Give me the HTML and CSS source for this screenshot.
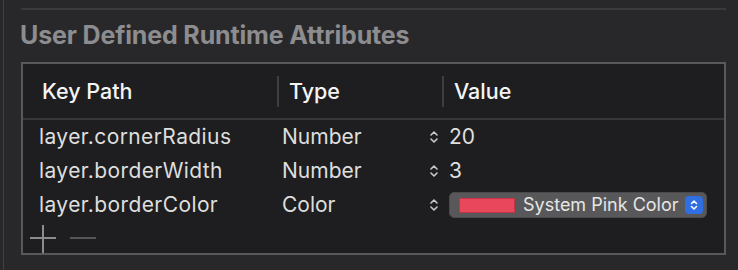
FILE: index.html
```html
<!DOCTYPE html>
<html lang="en">
<head>
    <meta charset="UTF-8">
    <title>User Defined Runtime Attributes</title>
    <link rel="stylesheet" href="styles.css">
</head>
<body>
    <div class="panel">
        <div class="separator"></div>
        <h2 class="section-title">User Defined Runtime Attributes</h2>

        <div class="attr-table">
            <div class="attr-header">
                <div class="col col-key">Key Path</div>
                <div class="col col-type">Type</div>
                <div class="col col-value">Value</div>
            </div>

            <div class="attr-row">
                <div class="cell cell-key">layer.cornerRadius</div>
                <div class="cell cell-type">
                    <span>Number</span>
                    <svg class="stepper" width="10" height="16" viewBox="0 0 10 16"><path d="M2 6 L5 3 L8 6 M2 10 L5 13 L8 10"/></svg>
                </div>
                <div class="cell cell-value">20</div>
            </div>

            <div class="attr-row">
                <div class="cell cell-key">layer.borderWidth</div>
                <div class="cell cell-type">
                    <span>Number</span>
                    <svg class="stepper" width="10" height="16" viewBox="0 0 10 16"><path d="M2 6 L5 3 L8 6 M2 10 L5 13 L8 10"/></svg>
                </div>
                <div class="cell cell-value">3</div>
            </div>

            <div class="attr-row">
                <div class="cell cell-key">layer.borderColor</div>
                <div class="cell cell-type">
                    <span>Color</span>
                    <svg class="stepper" width="10" height="16" viewBox="0 0 10 16"><path d="M2 6 L5 3 L8 6 M2 10 L5 13 L8 10"/></svg>
                </div>
                <div class="cell cell-value">
                    <div class="color-popup">
                        <span class="swatch"></span>
                        <span class="color-name">System Pink Color</span>
                        <span class="popup-arrows">
                            <svg width="10" height="14" viewBox="0 0 10 14"><path d="M2.5 5.5 L5 3 L7.5 5.5 M2.5 8.5 L5 11 L7.5 8.5"/></svg>
                        </span>
                    </div>
                </div>
            </div>

            <div class="attr-footer">
                <span class="btn-add"></span>
                <span class="btn-remove"></span>
            </div>
        </div>
    </div>
</body>
</html>
```

FILE: styles.css
```css
body {
    margin: 0;
    background-color: #28282a;
    font-family: Inter, "Liberation Sans", sans-serif;
    width: 738px;
    height: 270px;
    overflow: hidden;
}

.panel {
    margin-left: 3px;
    border-left: 1px solid #404042;
    height: 270px;
    padding-top: 8px;
    box-sizing: border-box;
}

.separator {
    margin-left: 17px;
    width: 705px;
    height: 2px;
    background-color: #3a3a3c;
}

.section-title {
    margin: 0 0 0 16px;
    height: 52px;
    line-height: 50px;
    font-size: 25px;
    font-weight: bold;
    color: #8d8d90;
    letter-spacing: -0.15px;
}

.attr-table {
    margin-left: 17px;
    width: 705px;
    height: 193px;
    box-sizing: border-box;
    border: 2px solid #59595b;
    background-color: #1e1e20;
}

.attr-header {
    display: grid;
    grid-template-columns: 254px 165px 1fr;
    height: 54px;
    align-items: center;
    border-bottom: 2px solid #37373a;
}

.col {
    color: #f4f4f4;
    font-size: 21.5px;
    line-height: 31px;
    font-weight: 500;
}

.col-key {
    padding-left: 19px;
}

.col-type,
.col-value {
    border-left: 2px solid #3e3e41;
    padding-left: 10px;
}

.attr-row {
    display: grid;
    grid-template-columns: 254px 165px 1fr;
    height: 34px;
    align-items: center;
    font-size: 21px;
    line-height: 34px;
    color: #dedede;
}

.cell-key {
    padding-left: 16px;
    letter-spacing: 0.4px;
}

.cell-type {
    display: flex;
    justify-content: space-between;
    align-items: center;
    padding-left: 5px;
    padding-right: 3px;
}

.stepper path {
    fill: none;
    stroke: #c9c9c9;
    stroke-width: 1.6;
    stroke-linecap: round;
    stroke-linejoin: round;
}

.cell-value {
    padding-left: 7px;
}

.color-popup {
    display: flex;
    align-items: center;
    width: 258px;
    height: 26px;
    box-sizing: border-box;
    padding: 0 3px 0 9px;
    background-color: #58585a;
    border: 1px solid #4a4a4c;
    border-radius: 5px;
    line-height: 24px;
}

.swatch {
    width: 54px;
    height: 13px;
    background-color: #e8475c;
    border: 1px solid #c23548;
}

.color-name {
    flex: 1;
    margin-left: 8px;
    font-size: 18px;
    color: #e6e6e6;
}

.popup-arrows {
    display: flex;
    align-items: center;
    justify-content: center;
    width: 18px;
    height: 18px;
    border-radius: 4px;
    background-color: #2f6fe2;
}

.popup-arrows path {
    fill: none;
    stroke: #ffffff;
    stroke-width: 1.5;
    stroke-linecap: round;
    stroke-linejoin: round;
}

.attr-footer {
    display: flex;
    align-items: center;
    height: 31px;
    padding-left: 7px;
    gap: 14px;
}

.btn-add,
.btn-remove {
    position: relative;
    width: 26px;
    height: 26px;
}

.btn-add::before,
.btn-add::after,
.btn-remove::before {
    content: "";
    position: absolute;
    background-color: #8c8c8c;
}

.btn-add::before {
    left: 0;
    top: 12px;
    width: 26px;
    height: 2px;
}

.btn-add::after {
    left: 12px;
    top: 0;
    width: 2px;
    height: 28px;
}

.btn-remove::before {
    left: 0;
    top: 12px;
    width: 26px;
    height: 2px;
    background-color: #555557;
}
```
